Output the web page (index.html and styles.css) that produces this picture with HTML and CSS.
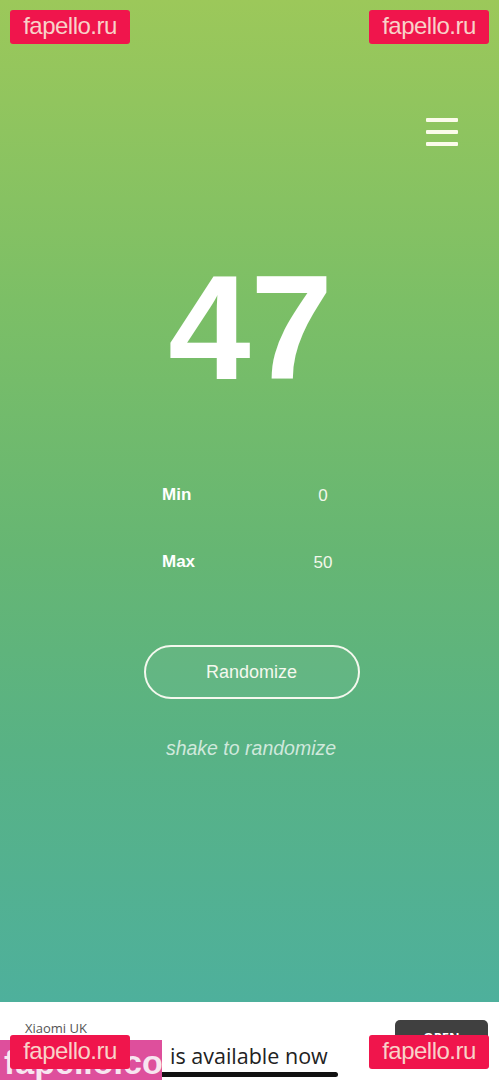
FILE: index.html
```html
<!DOCTYPE html>
<html lang="en">
<head>
    <meta charset="UTF-8">
    <meta name="viewport" content="width=device-width, initial-scale=1.0">
    <title>Randomizer</title>
    <link rel="stylesheet" href="styles.css">
</head>
<body>
    <!-- Main app screen -->
    <div class="app">
        <div class="topbar">
            <button class="menu" aria-label="Menu">
                <span></span>
                <span></span>
                <span></span>
            </button>
        </div>

        <div class="number">47</div>

        <div class="range">
            <div class="range-label">Min</div>
            <div class="range-value">0</div>
            <div class="range-label">Max</div>
            <div class="range-value">50</div>
        </div>

        <button class="randomize">Randomize</button>
        <p class="hint">shake to randomize</p>
    </div>

    <!-- Ad banner -->
    <div class="ad">
        <div class="ad-text">
            <div class="ad-brand">Xiaomi UK</div>
            <div class="ad-title">Redmi Note 11 is available now</div>
        </div>
        <div class="ad-open">OPEN</div>
    </div>
    <div class="home-bar"></div>

    <!-- Watermarks -->
    <div class="mark mark-tl">fapello.ru</div>
    <div class="mark mark-tr">fapello.ru</div>
    <div class="mark-pink">fapello.com</div>
    <div class="mark mark-bl">fapello.ru</div>
    <div class="mark mark-br">fapello.ru</div>
</body>
</html>
```

FILE: styles.css
```css
body {
    margin: 0;
    padding: 0;
    width: 499px;
    height: 1080px;
    overflow: hidden;
    position: relative;
    font-family: "Liberation Sans", Arial, sans-serif;
    color: white;
}
.app {
    height: 1002px;
    display: flex;
    flex-direction: column;
    align-items: center;
    background: linear-gradient(180deg, #9cc85a 0%, #7cbf66 30%, #66b673 55%, #58b285 75%, #4eb09c 100%);
}
.topbar {
    align-self: stretch;
    display: flex;
    justify-content: flex-end;
    padding: 118px 41px 0 0;
}
.menu {
    display: flex;
    flex-direction: column;
    gap: 8px;
    width: 32px;
    padding: 0;
    background: none;
    border: none;
}
.menu span {
    display: block;
    height: 4px;
    width: 32px;
    background-color: #fbfbea;
    border-radius: 1px;
}
.number {
    margin-top: 108px;
    margin-left: 2px;
    font-size: 148px;
    line-height: 1;
    font-weight: bold;
}
.range {
    margin-top: 60px;
    width: 175px;
    display: grid;
    grid-template-columns: 1fr 28px;
    grid-auto-rows: 67px;
    align-items: center;
    font-size: 17px;
}
.range-label {
    font-weight: bold;
    margin-top: -2px;
}
.range-value {
    text-align: center;
    color: #f2f7ea;
}
.randomize {
    margin-top: 49px;
    margin-left: 4px;
    width: 216px;
    height: 54px;
    border: 2.5px solid #f4f8ee;
    border-radius: 27px;
    background: rgba(255, 255, 255, 0.04);
    color: #f4f8ee;
    font-family: "Liberation Sans", Arial, sans-serif;
    font-size: 18px;
}
.hint {
    margin: 37px 0 0 3px;
    font-size: 19.5px;
    line-height: 24px;
    font-style: italic;
    color: rgba(255, 255, 255, 0.72);
}
.ad {
    height: 78px;
    background-color: white;
    display: flex;
    justify-content: space-between;
    padding: 0 11px 0 25px;
    font-family: "Open Sans", sans-serif;
}
.ad-text {
    padding-top: 16px;
}
.ad-brand {
    font-size: 13px;
    color: #555;
    line-height: 20px;
}
.ad-title {
    margin-top: 4px;
    text-indent: -9px;
    font-size: 21.5px;
    line-height: 28px;
    color: #222;
    font-weight: 500;
}
.ad-open {
    margin-top: 18px;
    width: 93px;
    height: 34px;
    background-color: #404040;
    border-radius: 5px;
    color: white;
    font-size: 13px;
    font-weight: bold;
    text-align: center;
    line-height: 34px;
}
.home-bar {
    position: absolute;
    left: 160px;
    bottom: 3px;
    width: 178px;
    height: 5px;
    border-radius: 3px;
    background-color: #111;
}
.mark {
    position: absolute;
    width: 120px;
    height: 34px;
    background-color: #f0154c;
    border-radius: 3px;
    color: #f8d2c8;
    font-size: 24px;
    line-height: 32px;
    text-align: center;
    letter-spacing: -0.5px;
}
.mark-tl {
    left: 10px;
    top: 10px;
}
.mark-tr {
    left: 369px;
    top: 10px;
}
.mark-bl {
    left: 10px;
    top: 1035px;
}
.mark-br {
    left: 369px;
    top: 1035px;
}
.mark-pink {
    position: absolute;
    left: 0;
    top: 1040px;
    width: 162px;
    height: 40px;
    background-color: #de4f9c;
    color: #f7e6f0;
    font-size: 34px;
    font-weight: bold;
    line-height: 44px;
    padding-left: 4px;
    box-sizing: border-box;
    white-space: nowrap;
    overflow: hidden;
}
```
